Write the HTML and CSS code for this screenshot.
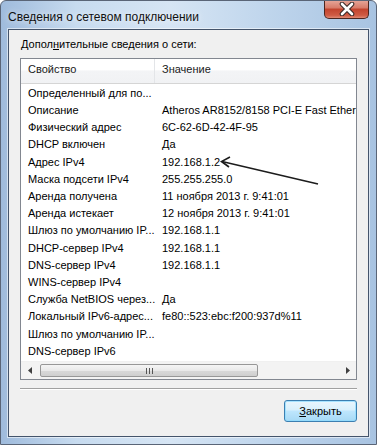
FILE: index.html
```html
<!DOCTYPE html>
<html lang="ru">
<head>
    <meta charset="UTF-8">
    <title>Сведения о сетевом подключении</title>
    <link rel="stylesheet" href="styles.css">
</head>
<body>
    <div class="window">
        <div class="titlebar">
            <span class="title">Сведения о сетевом подключении</span>
            <div class="close">
                <svg width="20" height="14" viewBox="0 0 20 14">
                    <path d="M5 2 L15 12 M15 2 L5 12" stroke="#3a2a28" stroke-width="4.6" stroke-linecap="round"/>
                    <path d="M5 2 L15 12 M15 2 L5 12" stroke="#ffffff" stroke-width="2.6" stroke-linecap="round"/>
                </svg>
            </div>
        </div>
        <div class="client">
            <div class="caption">Допол<u>н</u>ительные сведения о сети:</div>
            <div class="listview">
                <div class="header">
                    <div class="hcol">Свойство</div>
                    <div class="hcol last">Значение</div>
                </div>
                <div class="rows">
                    <div class="row"><span>Определенный для по...</span><span></span></div>
                    <div class="row"><span>Описание</span><span>Atheros AR8152/8158 PCI-E Fast Ethernet Controller</span></div>
                    <div class="row"><span>Физический адрес</span><span>6C-62-6D-42-4F-95</span></div>
                    <div class="row"><span>DHCP включен</span><span>Да</span></div>
                    <div class="row"><span>Адрес IPv4</span><span>192.168.1.2</span></div>
                    <div class="row"><span>Маска подсети IPv4</span><span>255.255.255.0</span></div>
                    <div class="row"><span>Аренда получена</span><span>11 ноября 2013 г. 9:41:01</span></div>
                    <div class="row"><span>Аренда истекает</span><span>12 ноября 2013 г. 9:41:01</span></div>
                    <div class="row"><span>Шлюз по умолчанию IP...</span><span>192.168.1.1</span></div>
                    <div class="row"><span>DHCP-сервер IPv4</span><span>192.168.1.1</span></div>
                    <div class="row"><span>DNS-сервер IPv4</span><span>192.168.1.1</span></div>
                    <div class="row"><span>WINS-сервер IPv4</span><span></span></div>
                    <div class="row"><span>Служба NetBIOS через...</span><span>Да</span></div>
                    <div class="row"><span>Локальный IPv6-адрес...</span><span>fe80::523:ebc:f200:937d%11</span></div>
                    <div class="row"><span>Шлюз по умолчанию IP...</span><span></span></div>
                    <div class="row"><span>DNS-сервер IPv6</span><span></span></div>
                </div>
                <div class="hscroll">
                    <div class="sbtn">
                        <svg width="4" height="7" viewBox="0 0 4 7"><path d="M4 0 L0 3.5 L4 7 Z" fill="#404040"/></svg>
                    </div>
                    <div class="track">
                        <div class="thumb"><span class="grip"></span></div>
                    </div>
                    <div class="sbtn">
                        <svg width="4" height="7" viewBox="0 0 4 7"><path d="M0 0 L4 3.5 L0 7 Z" fill="#404040"/></svg>
                    </div>
                </div>
            </div>
            <div class="sep"></div>
            <div class="buttons">
                <button class="btn"><u>З</u>акрыть</button>
            </div>
        </div>
        <svg class="arrow" width="377" height="445" viewBox="0 0 377 445">
            <path d="M318 184 L222 161.5" stroke="#1c1c1c" stroke-width="1.6" fill="none"/>
            <path d="M230 157 L221.5 161.5 L229 167" stroke="#1c1c1c" stroke-width="1.6" fill="none" stroke-linejoin="miter"/>
        </svg>
    </div>
</body>
</html>
```

FILE: styles.css
```css
body{
    margin: 0;
    padding: 0;
    font-family: "Liberation Sans", Arial, sans-serif;
    background: #ffffff;
}

.window{
    position: relative;
    width: 377px;
    height: 445px;
    box-sizing: border-box;
    padding: 0 7px 7px 7px;
    border: 1px solid #5a6577;
    border-radius: 6px 6px 0 0;
    background: linear-gradient(to right, #9fbbdc 0%, #c7dbef 20%, #d6e5f4 45%, #bcd3eb 75%, #a8c3e1 100%);
    display: flex;
    flex-direction: column;
    overflow: hidden;
}

.titlebar{
    height: 28px;
    display: flex;
    align-items: flex-start;
    justify-content: space-between;
}
.title{
    font-size: 12px;
    color: #111;
    margin-top: 9px;
    text-shadow: 0 0 6px rgba(255,255,255,0.9);
}
.close{
    width: 45px;
    height: 19px;
    margin-top: -1px;
    margin-right: 0;
    box-sizing: border-box;
    border: 1px solid #4b2620;
    border-top: none;
    border-radius: 0 0 5px 5px;
    background: linear-gradient(to bottom, #e7a99c 0%, #d77a68 45%, #c2432d 50%, #cf5b44 85%, #e08a74 100%);
    display: flex;
    align-items: center;
    justify-content: center;
}

.client{
    flex: 1;
    background: #f0f0f0;
    border: 1px solid #44546b;
    box-shadow: 0 0 0 1px rgba(255,255,255,0.55);
    padding: 0 11px;
    display: flex;
    flex-direction: column;
}
.caption{
    font-size: 11px;
    color: #000;
    height: 28px;
    line-height: 28px;
    padding-left: 1px;
}
.caption u, .btn u{
    text-decoration: underline;
}

.listview{
    height: 322px;
    box-sizing: border-box;
    border: 1px solid #828790;
    background: #fff;
    display: flex;
    flex-direction: column;
    overflow: hidden;
}
.header{
    height: 24px;
    display: flex;
    background: linear-gradient(to bottom, #ffffff 0%, #ffffff 45%, #f3f4f6 50%, #f1f2f4 100%);
    border-bottom: 1px solid #d5d5d5;
    font-size: 11px;
    color: #1a1a1a;
}
.hcol{
    width: 126px;
    padding-left: 7px;
    line-height: 21px;
    border-right: 1px solid #e3e5e8;
}
.hcol.last{
    flex: 1;
    border-right: none;
}
.rows{
    height: 276px;
    padding-top: 1px;
    font-size: 11px;
    color: #000;
}
.row{
    display: grid;
    grid-template-columns: 134px 1fr;
    height: 17.2px;
    line-height: 17px;
    white-space: nowrap;
}
.row span{
    overflow: hidden;
    padding-left: 7px;
}

.hscroll{
    height: 17px;
    margin-top: 1px;
    display: flex;
    align-items: stretch;
    background: #f3f3f3;
    border-top: 1px solid #f0f0f0;
}
.sbtn{
    width: 17px;
    display: flex;
    align-items: center;
    justify-content: center;
}
.track{
    flex: 1;
    display: flex;
    align-items: center;
    padding: 0 2px;
}
.thumb{
    width: 218px;
    height: 13px;
    box-sizing: border-box;
    border: 1px solid #979797;
    border-radius: 2px;
    background: linear-gradient(to bottom, #f5f5f5 0%, #e9e9e9 50%, #d8d8d8 55%, #cfcfcf 100%);
    display: flex;
    align-items: center;
    justify-content: center;
}
.grip{
    width: 7px;
    height: 6px;
    background: repeating-linear-gradient(to right, #555 0, #555 1px, transparent 1px, transparent 3px);
}

.sep{
    margin-top: 8px;
    height: 1px;
    background: #a0a0a0;
    border-bottom: 1px solid #ffffff;
}
.buttons{
    display: flex;
    justify-content: flex-end;
    padding-top: 10px;
}
.btn{
    width: 73px;
    height: 22px;
    box-sizing: border-box;
    border: 1px solid #3c7fb1;
    border-radius: 3px;
    background: linear-gradient(to bottom, #eaf6fd 0%, #d9f0fc 45%, #bee6fd 50%, #a7d9f5 100%);
    box-shadow: inset 0 0 0 1px rgba(140,220,255,0.7);
    font-family: "Liberation Sans", Arial, sans-serif;
    font-size: 11px;
    color: #000;
    padding: 0;
}

.arrow{
    position: absolute;
    left: -1px;
    top: -1px;
    pointer-events: none;
}
```
